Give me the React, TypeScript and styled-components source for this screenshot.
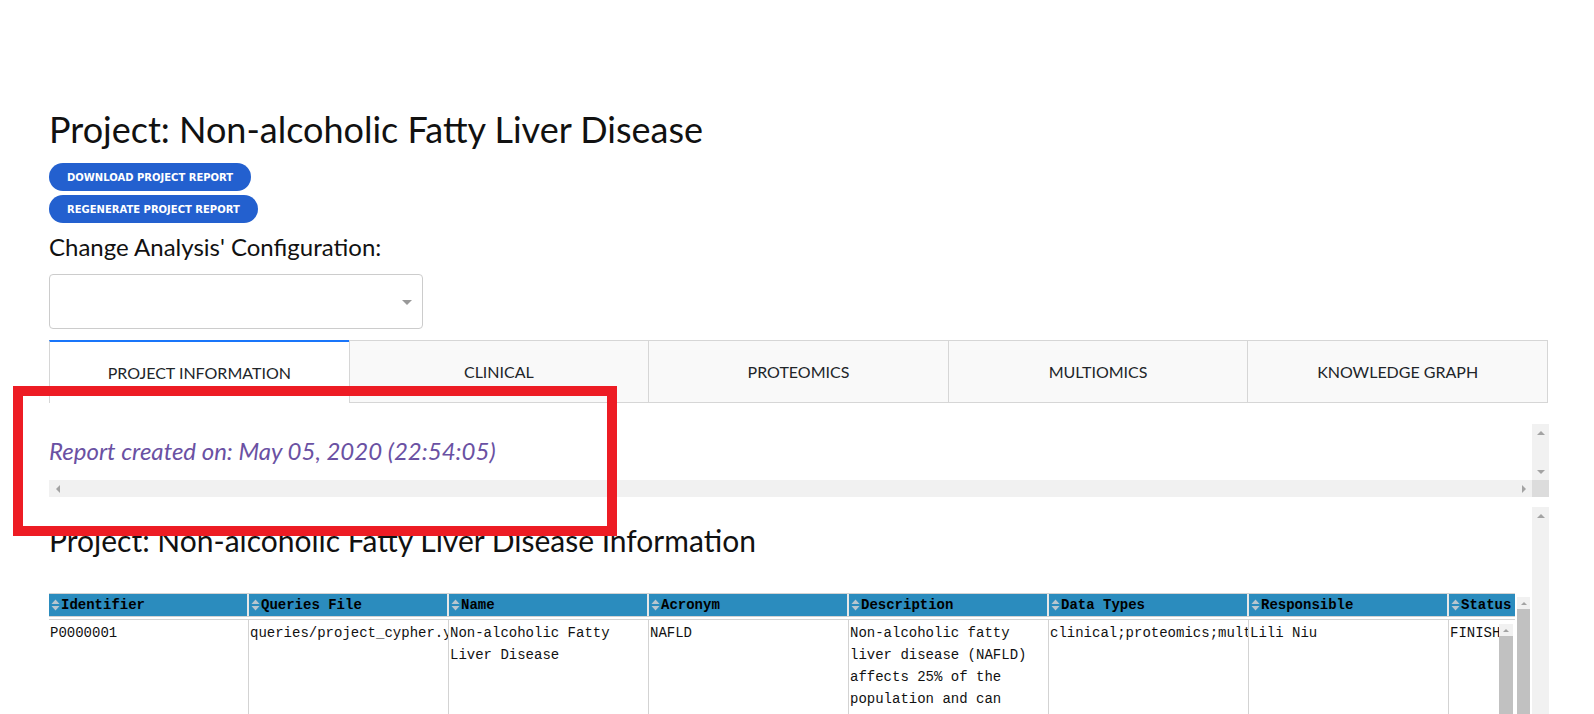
import React from "react";
import styled, { createGlobalStyle } from "styled-components";

const UI = `"Lato", "Open Sans", sans-serif`;
const MONO = `"Liberation Mono", "DejaVu Sans Mono", monospace`;
const ARROW = "#a3a3a3";

const Global = createGlobalStyle`
  html, body { margin: 0; padding: 0; background: #fff; overflow: hidden; }
  body { font-family: ${UI}; color: #212529; }
  * { box-sizing: border-box; }
`;

const Page = styled.div`
  position: relative;
  width: 1594px;
  height: 714px;
  overflow: hidden;
  padding: 105px 45px 0 49px;
`;

const Title = styled.h1`
  margin: 0;
  font-size: 36px;
  line-height: 48px;
  font-weight: 400;
  color: #111;
`;

const ButtonStack = styled.div`
  margin-top: 10px;
  display: flex;
  flex-direction: column;
  align-items: flex-start;
  gap: 4px;
`;

const PillButton = styled.button`
  height: 28px;
  padding: 0 18px;
  border: none;
  border-radius: 14px;
  background: #2360cf;
  color: #fff;
  font-family: "DejaVu Sans", Verdana, sans-serif;
  font-weight: 700;
  font-size: 10px;
  text-transform: uppercase;
  cursor: pointer;
`;

const FieldLabel = styled.div`
  margin-top: 10px;
  font-size: 24px;
  line-height: 28px;
  color: #111;
`;

const SelectBox = styled.div`
  margin-top: 13px;
  width: 374px;
  height: 55px;
  border: 1px solid #ccc;
  border-radius: 4px;
  display: flex;
  align-items: center;
  justify-content: flex-end;
  padding-right: 10px;
`;

const Caret = styled.span`
  width: 0;
  height: 0;
  border-style: solid;
  border-width: 5px 5px 2.5px;
  border-color: #999 transparent transparent;
  margin-top: 3px;
`;

const TabBar = styled.div`
  margin-top: 11px;
  display: flex;
  width: 1499px;
  height: 63px;
`;

const Tab = styled.div<{ $active?: boolean }>`
  flex: 1 1 0;
  display: flex;
  align-items: center;
  justify-content: center;
  border-left: 1px solid #d6d6d6;
  border-top: ${(p) => (p.$active ? "2px solid #1975fa" : "1px solid #d6d6d6")};
  border-bottom: ${(p) => (p.$active ? "none" : "1px solid #d6d6d6")};
  background: ${(p) => (p.$active ? "#fff" : "#f9f9f9")};
  font-size: 16px;
  color: #212529;
  &:last-child {
    border-right: 1px solid #d6d6d6;
  }
`;

/* ---- scrollbar chrome ---- */

const VTrack = styled.div<{ $w: number; $top?: number; $left?: number }>`
  flex: 0 0 ${(p) => p.$w}px;
  width: ${(p) => p.$w}px;
  align-self: stretch;
  margin-top: ${(p) => p.$top ?? 0}px;
  margin-left: ${(p) => p.$left ?? 0}px;
  background: #f1f1f1;
  display: flex;
  flex-direction: column;
`;

const HTrack = styled.div`
  height: 17px;
  background: #f1f1f1;
  display: flex;
`;

const ArrowCell = styled.div<{ $size: number }>`
  flex: 0 0 ${(p) => p.$size}px;
  display: flex;
  align-items: center;
  justify-content: center;
`;

const Arrow = styled.span<{ $dir: "up" | "down" | "left" | "right"; $s: number }>`
  width: 0;
  height: 0;
  border-style: solid;
  ${({ $dir, $s }) =>
    $dir === "up"
      ? `border-width: 0 ${$s}px ${$s}px; border-color: transparent transparent ${ARROW};`
      : $dir === "down"
      ? `border-width: ${$s}px ${$s}px 0; border-color: ${ARROW} transparent transparent;`
      : $dir === "left"
      ? `border-width: ${$s}px ${$s}px ${$s}px 0; border-color: transparent ${ARROW} transparent transparent;`
      : `border-width: ${$s}px 0 ${$s}px ${$s}px; border-color: transparent transparent transparent ${ARROW};`}
`;

const Spacer = styled.div`
  flex: 1 1 auto;
`;

const Thumb = styled.div`
  flex: 1 1 auto;
  background: #c1c1c1;
`;

const Corner = styled.div`
  background: #dcdcdc;
`;

/* ---- report panel ---- */

const ReportPanel = styled.div`
  margin-top: 21px;
  width: 1500px;
  height: 73px;
  display: grid;
  grid-template-columns: 1fr 17px;
  grid-template-rows: 56px 17px;
`;

const ReportViewport = styled.div`
  overflow: hidden;
`;

const ReportText = styled.p`
  margin: 0;
  padding-top: 13px;
  font-size: 24px;
  line-height: 28px;
  font-style: italic;
  color: #6a51a3;
  white-space: nowrap;
`;

/* ---- info panel ---- */

const InfoPanel = styled.div`
  margin-top: 10px;
  width: 1500px;
  height: 420px;
  display: flex;
`;

const InfoContent = styled.div`
  flex: 0 0 1483px;
  overflow: hidden;
`;

const SectionHeading = styled.h2`
  margin: 14px 0 0;
  font-size: 30px;
  line-height: 38px;
  font-weight: 400;
  color: #111;
`;

const TableFrame = styled.div`
  margin-top: 34px;
  height: 320px;
  display: flex;
`;

const TableClip = styled.div`
  flex: 0 0 1466px;
  overflow: hidden;
  display: flex;
  flex-direction: column;
`;

const HeaderRow = styled.div`
  display: flex;
  width: max-content;
  border-top: 1px solid #d3d3d3;
  border-bottom: 1px solid #d3d3d3;
  margin-bottom: 2px;
`;

const HeaderCell = styled.div`
  flex: 0 0 200px;
  height: 22px;
  display: flex;
  align-items: center;
  padding-left: 2px;
  background: #2b8cbe;
  border-right: 2px solid #e8e8e8;
  font-family: ${MONO};
  font-weight: 700;
  font-size: 14px;
  color: #000;
  white-space: nowrap;
  overflow: hidden;
`;

const SortIcon = styled.svg`
  flex: 0 0 auto;
  width: 9px;
  height: 14px;
  margin-right: 1px;
`;

const BodyFrame = styled.div`
  flex: 1 1 auto;
  display: flex;
  border-top: 1px solid #d3d3d3;
`;

const BodyClip = styled.div`
  flex: 0 0 1450px;
  overflow: hidden;
`;

const BodyRow = styled.div`
  display: flex;
  width: max-content;
`;

const BodyCell = styled.div<{ $nowrap?: boolean }>`
  flex: 0 0 200px;
  padding: 2px 1px 0;
  border-right: 1px solid #d3d3d3;
  font-family: ${MONO};
  font-size: 14px;
  line-height: 22px;
  color: #111;
  overflow: hidden;
  white-space: ${(p) => (p.$nowrap ? "nowrap" : "normal")};
`;

const Annotation = styled.div`
  position: absolute;
  left: 13px;
  top: 386px;
  width: 604px;
  height: 150px;
  border: 10px solid #ed1c24;
  pointer-events: none;
  z-index: 10;
`;

const tabs = ["Project information", "Clinical", "Proteomics", "Multiomics", "Knowledge graph"];

const columns = [
  "Identifier",
  "Queries File",
  "Name",
  "Acronym",
  "Description",
  "Data Types",
  "Responsible",
  "Status",
];

const row: { text: string; nowrap?: boolean }[] = [
  { text: "P0000001", nowrap: true },
  { text: "queries/project_cypher.yml", nowrap: true },
  { text: "Non-alcoholic Fatty Liver Disease" },
  { text: "NAFLD" },
  {
    text:
      "Non-alcoholic fatty liver disease (NAFLD) affects 25% of the population and can progress to cirrhosis with limited treatment options. As the liver secretes most of the blood plasma proteins, liver disease may affect the plasma proteome.",
  },
  { text: "clinical;proteomics;multiomics", nowrap: true },
  { text: "Lili Niu" },
  { text: "FINISHED", nowrap: true },
];

const Sort = () => (
  <SortIcon viewBox="0 0 9 14">
    <polygon points="0.5,6 4.5,1.5 8.5,6" fill="#b9c6cf" />
    <polygon points="0.5,8 4.5,12.5 8.5,8" fill="#b9c6cf" />
  </SortIcon>
);

export default function App() {
  return (
    <>
      <Global />
      <Page>
        <Title>Project: Non-alcoholic Fatty Liver Disease</Title>
        <ButtonStack>
          <PillButton>Download Project Report</PillButton>
          <PillButton>Regenerate Project Report</PillButton>
        </ButtonStack>
        <FieldLabel>Change Analysis' Configuration:</FieldLabel>
        <SelectBox>
          <Caret />
        </SelectBox>
        <TabBar>
          {tabs.map((t, i) => (
            <Tab key={t} $active={i === 0}>
              {t.toUpperCase()}
            </Tab>
          ))}
        </TabBar>

        <ReportPanel>
          <ReportViewport>
            <ReportText>Report created on: May 05, 2020 (22:54:05)</ReportText>
          </ReportViewport>
          <VTrack $w={17}>
            <ArrowCell $size={17}>
              <Arrow $dir="up" $s={4} />
            </ArrowCell>
            <Spacer />
            <ArrowCell $size={17}>
              <Arrow $dir="down" $s={4} />
            </ArrowCell>
          </VTrack>
          <HTrack>
            <ArrowCell $size={17}>
              <Arrow $dir="left" $s={4} />
            </ArrowCell>
            <Spacer />
            <ArrowCell $size={17}>
              <Arrow $dir="right" $s={4} />
            </ArrowCell>
          </HTrack>
          <Corner />
        </ReportPanel>

        <InfoPanel>
          <InfoContent>
            <SectionHeading>Project: Non-alcoholic Fatty Liver Disease Information</SectionHeading>
            <TableFrame>
              <TableClip>
                <HeaderRow>
                  {columns.map((c) => (
                    <HeaderCell key={c}>
                      <Sort />
                      {c}
                    </HeaderCell>
                  ))}
                </HeaderRow>
                <BodyFrame>
                  <BodyClip>
                    <BodyRow>
                      {row.map((cell, i) => (
                        <BodyCell key={i} $nowrap={cell.nowrap}>
                          {cell.text}
                        </BodyCell>
                      ))}
                    </BodyRow>
                  </BodyClip>
                  <VTrack $w={14} $top={4}>
                    <ArrowCell $size={12}>
                      <Arrow $dir="up" $s={3.5} />
                    </ArrowCell>
                    <Thumb />
                  </VTrack>
                </BodyFrame>
              </TableClip>
              <VTrack $w={13} $top={4} $left={2}>
                <ArrowCell $size={12}>
                  <Arrow $dir="up" $s={3.5} />
                </ArrowCell>
                <Thumb />
              </VTrack>
            </TableFrame>
          </InfoContent>
          <VTrack $w={17}>
            <ArrowCell $size={17}>
              <Arrow $dir="up" $s={4} />
            </ArrowCell>
            <Spacer />
          </VTrack>
        </InfoPanel>

        <Annotation />
      </Page>
    </>
  );
}
